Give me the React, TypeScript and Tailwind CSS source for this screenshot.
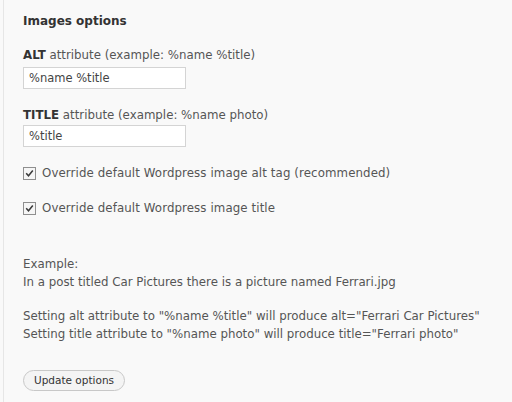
import React from "react";

const Check = () => (
  <span className="flex h-[13px] w-[13px] items-center justify-center border border-[#8f8f8f] bg-[#f6f6f6]">
    <svg width="9" height="9" viewBox="0 0 9 9">
      <path d="M1.2 4.2 L3.5 6.8 L7.8 1.6" fill="none" stroke="#3a3a3a" strokeWidth="1.5" />
    </svg>
  </span>
);

export default function App() {
  return (
    <div className="h-[402px] w-[512px] bg-[#f9f9f9] font-['DejaVu_Sans',sans-serif] text-[11.8px] text-[#555]">
      <div className="ml-[3px] h-full border-l border-[#e6e6e6] pl-[19px] pt-[12px]">
        <h3 className="text-[12px] font-bold leading-[18px] text-[#333]">Images options</h3>

        <div className="mt-[18px]">
          <div className="leading-[14px]">
            <b className="text-[#333]">ALT</b> attribute (example: %name %title)
          </div>
          <input
            className="mt-[5px] h-[22px] w-[163px] border border-[#d4d4d4] bg-white px-[5px] text-[11.5px] text-[#444] outline-none"
            defaultValue="%name %title"
          />
        </div>

        <div className="mt-[19px]">
          <div className="leading-[14px]">
            <b className="text-[#333]">TITLE</b> attribute (example: %name photo)
          </div>
          <input
            className="mt-[3px] h-[22px] w-[163px] border border-[#d4d4d4] bg-white px-[5px] text-[11.5px] text-[#444] outline-none"
            defaultValue="%title"
          />
        </div>

        <label className="mt-[19px] flex items-center gap-[6px] leading-[14px] tracking-[0.1px]">
          <Check />
          Override default Wordpress image alt tag (recommended)
        </label>
        <label className="mt-[21px] flex items-center gap-[6px] leading-[14px] tracking-[0.1px]">
          <Check />
          Override default Wordpress image title
        </label>

        <div className="mt-[40px] leading-[18px]">
          <div>Example:</div>
          <div>In a post titled Car Pictures there is a picture named Ferrari.jpg</div>
          <div className="mt-[16px]">
            Setting alt attribute to "%name %title" will produce alt="Ferrari Car Pictures"
          </div>
          <div>Setting title attribute to "%name photo" will produce title="Ferrari photo"</div>
        </div>

        <button className="mt-[27px] h-[21px] rounded-full border border-[#c8c8c8] bg-[#f4f4f4] px-[10px] text-[10.5px] leading-[19px] text-[#333]">
          Update options
        </button>
      </div>
    </div>
  );
}
